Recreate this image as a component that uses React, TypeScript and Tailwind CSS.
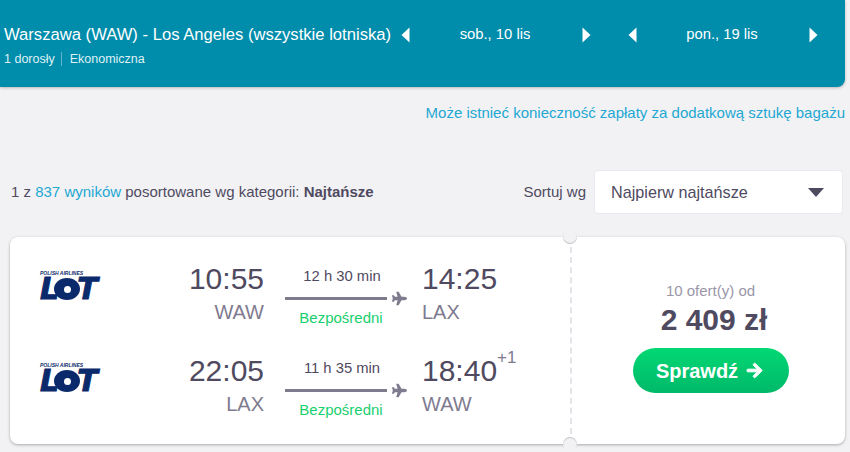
import React from 'react';
import { FaPlane, FaArrowRight } from 'react-icons/fa';

const Caret = ({ dir }: { dir: 'left' | 'right' }) => (
  <svg width="9" height="16" viewBox="0 0 9 16" className="shrink-0 fill-white">
    {dir === 'left' ? <path d="M8.5 0.5V15.5L0.5 8Z" /> : <path d="M0.5 0.5V15.5L8.5 8Z" />}
  </svg>
);

const DateStepper = ({ label }: { label: string }) => (
  <div className="flex w-[190px] items-center justify-between text-[14.8px] text-white">
    <Caret dir="left" />
    <span className="pr-[2px]">{label}</span>
    <Caret dir="right" />
  </div>
);

const LotLogo = () => (
  <div className="w-[62px] shrink-0 text-[#0b2a6b]">
    <div className="h-[6px] text-[5px] leading-[6px] font-bold italic whitespace-nowrap">POLISH AIRLINES</div>
    <div className="mt-[2px] flex h-[22px] items-center font-['DejaVu_Sans',sans-serif] text-[30px] leading-[22px] font-bold italic [-webkit-text-stroke:1px_#0b2a6b]">
      <span>L</span>
      <span className="-ml-[5px] -mr-[3px] flex h-[22px] w-[26px] shrink-0 items-center justify-center rounded-[50%] bg-[#0b2a6b]">
        <span className="h-[7px] w-[7px] rounded-full bg-white" />
      </span>
      <span>T</span>
    </div>
  </div>
);

const FlightRow = ({
  depart, from, duration, arrive, to, plus,
}: { depart: string; from: string; duration: string; arrive: string; to: string; plus?: string }) => (
  <div className="flex h-[92px] items-start">
    <div className="w-[90px] pt-[11px]"><LotLogo /></div>
    <div className="w-[134px] pt-[1px] text-right">
      <div className="text-[30px] leading-[38px] text-[#4f4a5f]">{depart}</div>
      <div className="mt-[2px] text-xl leading-[24px] text-[#7f7b8f]">{from}</div>
    </div>
    <div className="ml-[21px] w-[102px] text-center">
      <div className="pt-[8px] pl-[12px] text-[14.8px] leading-[18px] whitespace-nowrap text-[#4f4a5f]">{duration}</div>
      <div className="mt-[12px] h-[3px] bg-[#7f7b8f]" />
      <div className="mt-[9px] pl-[10px] text-[15px] leading-[18px] text-[#18cf6e]">Bezpośredni</div>
    </div>
    <FaPlane className="mt-[32px] ml-[5px] shrink-0 text-[15px] text-[#7f7b8f]" />
    <div className="ml-[15px] pt-[1px]">
      <div className="flex items-start text-[30px] leading-[38px] text-[#4f4a5f]">
        {arrive}
        {plus && <span className="mt-[-3px] text-[17px] leading-[18px] text-[#7f7b8f]">{plus}</span>}
      </div>
      <div className="mt-[2px] text-xl leading-[24px] text-[#7f7b8f]">{to}</div>
    </div>
  </div>
);

export default function App() {
  return (
    <div className="h-[452px] w-[850px] overflow-hidden bg-[#f2f2f5] font-['Liberation_Sans',Arial,sans-serif]">
      <header className="mr-[5px] flex h-[87px] rounded-br-lg bg-[#008cab] pl-1 shadow-[0_1px_3px_rgba(0,0,0,0.25)]">
        <div className="w-[397px] pt-[25px] text-white">
          <div className="text-[16.64px] leading-[20px] whitespace-nowrap">Warszawa (WAW) - Los Angeles (wszystkie lotniska)</div>
          <div className="mt-[7px] flex items-center text-[12.5px] leading-[14px] text-[#dff1f5]">
            <span>1 dorosły</span>
            <span className="mr-[8px] ml-[6px] h-[14px] w-px bg-[#5fb6ca]" />
            <span>Ekonomiczna</span>
          </div>
        </div>
        <div className="flex h-[69px] items-center gap-[37px]">
          <DateStepper label="sob., 10 lis" />
          <DateStepper label="pon., 19 lis" />
        </div>
      </header>

      <div className="mt-[16px] mr-[5px] text-right text-[15px] leading-[20px] text-[#23a8d2]">
        Może istnieć konieczność zapłaty za dodatkową sztukę bagażu
      </div>

      <div className="mt-[47px] flex h-[44px] items-center pr-[7px] pl-[11px] text-[15px] text-[#4f4a5f]">
        <p className="flex-1">
          1 z <span className="text-[#23a8d2]">837 wyników</span> posortowane wg kategorii: <strong>Najtańsze</strong>
        </p>
        <span className="mr-[8px]">Sortuj wg</span>
        <div className="flex h-[44px] w-[249px] items-center justify-between rounded border border-[#ebebef] bg-white pr-[18px] pl-[16px] text-[16.2px]">
          <span>Najpierw najtańsze</span>
          <svg width="16" height="9" viewBox="0 0 16 9" className="fill-[#4f4a5f]"><path d="M0 0H16L8 9Z" /></svg>
        </div>
      </div>

      <div className="relative mt-[23px] mr-[5px] ml-[10px] flex h-[207px] rounded-lg bg-white shadow-[0_1px_3px_rgba(0,0,0,0.3)]">
        <div className="w-[560px] pt-[22px] pl-[30px]">
          <FlightRow depart="10:55" from="WAW" duration="12 h 30 min" arrive="14:25" to="LAX" />
          <FlightRow depart="22:05" from="LAX" duration="11 h 35 min" arrive="18:40" to="WAW" plus="+1" />
        </div>
        <div className="flex flex-1 flex-col items-center border-l-2 border-dashed border-[#e3e3e9] pt-[45px] pl-[4px]">
          <div className="text-[15px] leading-[18px] text-[#9a96a8]">10 ofert(y) od</div>
          <div className="mt-[3px] ml-[7px] text-[30px] leading-[34px] font-bold text-[#4f4a5f]">2 409 zł</div>
          <button className="mt-[11px] flex h-[45px] w-[156px] items-center justify-center gap-[8px] rounded-full bg-gradient-to-b from-[#03d873] to-[#00b96a] pr-[2px] text-xl font-bold text-white">
            Sprawdź <FaArrowRight className="text-[17px]" stroke="currentColor" strokeWidth={30} />
          </button>
        </div>
        <span className="absolute top-[-7px] left-[553px] h-[14px] w-[14px] rounded-full bg-[#f2f2f5] shadow-[inset_0_-1px_1px_rgba(0,0,0,0.2)]" />
        <span className="absolute bottom-[-7px] left-[553px] h-[14px] w-[14px] rounded-full bg-[#f2f2f5] shadow-[inset_0_1px_1px_rgba(0,0,0,0.2)]" />
      </div>
    </div>
  );
}
